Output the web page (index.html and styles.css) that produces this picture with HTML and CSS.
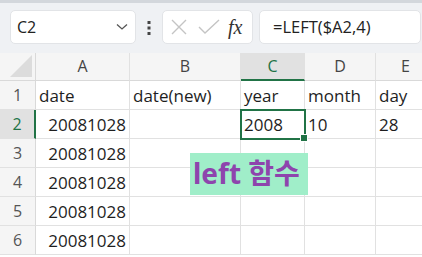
FILE: index.html
```html
<!DOCTYPE html>
<html lang="ko">
<head>
  <meta charset="UTF-8">
  <title>LEFT 함수</title>
  <link rel="stylesheet" href="styles.css">
</head>
<body>
<div class="ribbon-edge"></div>
<div class="toolbar">
  <div class="namebox">
    <span>C2</span>
    <svg width="12" height="8" viewBox="0 0 12 8"><path d="M1 1.5 L6 6 L11 1.5" fill="none" stroke="#555" stroke-width="1.3"/></svg>
  </div>
  <div class="dots">
    <svg width="4" height="14" viewBox="0 0 4 14"><rect x="0.5" y="0" width="3" height="3" fill="#444"/><rect x="0.5" y="5.5" width="3" height="3" fill="#444"/><rect x="0.5" y="11" width="3" height="3" fill="#444"/></svg>
  </div>
  <div class="fxbox">
    <svg width="16" height="16" viewBox="0 0 16 16"><path d="M1 1 L15 15 M15 1 L1 15" stroke="#c4c4c4" stroke-width="1.4"/></svg>
    <svg width="22" height="16" viewBox="0 0 22 16"><path d="M1 8 L7 14 L21 1" fill="none" stroke="#c4c4c4" stroke-width="1.4"/></svg>
    <span class="fx">fx</span>
  </div>
  <div class="formula">=LEFT($A2,4)</div>
</div>

<div class="sheet">
  <div class="corner"><div class="tri"></div></div>
  <div class="colhead">A</div>
  <div class="colhead">B</div>
  <div class="colhead active">C</div>
  <div class="colhead">D</div>
  <div class="colhead">E</div>

  <div class="rowhead">1</div>
  <div class="cell">date</div>
  <div class="cell">date(new)</div>
  <div class="cell">year</div>
  <div class="cell">month</div>
  <div class="cell">day</div>

  <div class="rowhead active">2</div>
  <div class="cell num">20081028</div>
  <div class="cell"></div>
  <div class="cell selected">2008<span class="handle"></span></div>
  <div class="cell">10</div>
  <div class="cell">28</div>

  <div class="rowhead">3</div>
  <div class="cell num">20081028</div>
  <div class="cell"></div>
  <div class="cell"></div>
  <div class="cell"></div>
  <div class="cell"></div>

  <div class="rowhead">4</div>
  <div class="cell num">20081028</div>
  <div class="cell"></div>
  <div class="cell"></div>
  <div class="cell"></div>
  <div class="cell"></div>

  <div class="rowhead">5</div>
  <div class="cell num">20081028</div>
  <div class="cell"></div>
  <div class="cell"></div>
  <div class="cell"></div>
  <div class="cell"></div>

  <div class="rowhead">6</div>
  <div class="cell num">20081028</div>
  <div class="cell"></div>
  <div class="cell"></div>
  <div class="cell"></div>
  <div class="cell"></div>

  <div class="label">left 함수</div>
</div>
</body>
</html>
```

FILE: styles.css
```css
body {
  margin: 0;
  padding: 0;
  font-family: "Open Sans", "Noto Sans", sans-serif;
  color: #222;
  background: #fff;
  overflow: hidden;
}
.ribbon-edge {
  height: 3px;
  background: #d3d7dc;
  box-shadow: 0 1px 3px rgba(0, 0, 0, 0.15);
}
.toolbar {
  display: flex;
  align-items: center;
  height: 50px;
  padding: 0 1px 0 10px;
  background: #eff1f4;
  box-sizing: border-box;
  padding-bottom: 2px;
}
.namebox {
  width: 126px;
  height: 34px;
  box-sizing: border-box;
  background: #fff;
  border: 1px solid #e2e4e7;
  border-radius: 5px;
  display: flex;
  align-items: center;
  justify-content: space-between;
  padding: 0 7px 0 6px;
  font-size: 16px;
  color: #222;
}
.dots {
  width: 26px;
  display: flex;
  justify-content: center;
  padding-top: 1px;
}
.fxbox {
  width: 91px;
  height: 34px;
  box-sizing: border-box;
  background: #fff;
  border: 1px solid #e2e4e7;
  border-radius: 5px;
  display: flex;
  align-items: center;
  gap: 11px;
  padding-left: 8px;
}
.fx {
  font-family: "Liberation Serif", serif;
  font-style: italic;
  font-size: 20px;
  color: #333;
  margin-left: -3px;
}
.formula {
  flex: 1;
  margin-left: 6px;
  height: 34px;
  box-sizing: border-box;
  background: #fff;
  border: 1px solid #e2e4e7;
  border-radius: 5px;
  padding-left: 13px;
  font-size: 16.5px;
  line-height: 31px;
  color: #222;
}
.sheet {
  position: relative;
  display: grid;
  grid-template-columns: 36px 94px 111px 64px 71px 60px;
  grid-template-rows: 28px repeat(6, 29px);
  background: #fff;
}
.corner {
  background: #f5f5f5;
  border-right: 1px solid #d9d9d9;
  border-bottom: 1px solid #d9d9d9;
  position: relative;
}
.tri {
  position: absolute;
  right: 3px;
  bottom: 3px;
  width: 0;
  height: 0;
  border-left: 22px solid transparent;
  border-bottom: 22px solid #dcdcdc;
}
.colhead {
  background: #f5f5f5;
  border-right: 1px solid #e1e1e1;
  border-bottom: 1px solid #d9d9d9;
  text-align: center;
  font-size: 16px;
  line-height: 27px;
  color: #444;
}
.colhead.active {
  background: #e1e1e1;
  color: #217346;
  border-bottom: 2px solid #217346;
  line-height: 26px;
}
.rowhead {
  background: #f5f5f5;
  border-right: 1px solid #d9d9d9;
  border-bottom: 1px solid #e1e1e1;
  text-align: center;
  font-size: 16px;
  line-height: 28px;
  color: #555;
}
.rowhead.active {
  background: #e1e1e1;
  color: #217346;
  border-right: 2px solid #217346;
}
.cell {
  position: relative;
  border-right: 1px solid #e1e1e1;
  border-bottom: 1px solid #e1e1e1;
  font-size: 17px;
  line-height: 29px;
  padding-left: 3px;
  white-space: nowrap;
  color: #1e1e1e;
}
.cell.num {
  text-align: right;
  padding: 0 3px 0 0;
}
.cell.selected {
  outline: 2px solid #217346;
  outline-offset: -1px;
  z-index: 1;
}
.handle {
  position: absolute;
  right: -4px;
  bottom: -4px;
  width: 6px;
  height: 6px;
  background: #217346;
  border: 1px solid #fff;
}
.label {
  position: absolute;
  left: 190px;
  top: 100px;
  width: 118px;
  height: 42px;
  box-sizing: border-box;
  background: #a0eec9;
  color: #8e44ad;
  font-family: "Noto Sans", "Noto Sans CJK KR", sans-serif;
  font-weight: bold;
  font-size: 28px;
  line-height: 40px;
  padding-left: 3px;
  white-space: nowrap;
  z-index: 2;
}
```
